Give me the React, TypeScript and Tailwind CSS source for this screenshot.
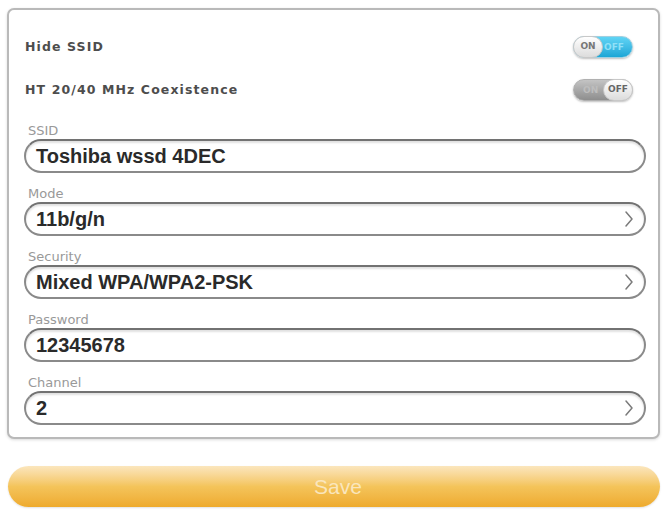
import React from "react";

function Chevron() {
  return (
    <svg width="10" height="18" viewBox="0 0 10 18" className="shrink-0">
      <path d="M2 2 L8 9 L2 16" fill="none" stroke="#7a7a7a" strokeWidth="1.5" strokeLinecap="round" strokeLinejoin="round" />
    </svg>
  );
}

function ToggleOn() {
  return (
    <div className="relative w-[60px] h-[22px] rounded-full bg-gradient-to-b from-[#5fd4f5] to-[#1aa6d6] border border-[#9fcfe0] shadow-[0_1px_2px_rgba(0,0,0,0.25)]">
      <span className="absolute right-[8px] top-[4px] text-[9px] font-bold text-[#8fe0f7] [font-family:'DejaVu_Sans',sans-serif]">OFF</span>
      <div className="absolute left-[-1px] top-[-1px] w-[30px] h-[22px] rounded-full bg-gradient-to-b from-[#ffffff] to-[#dcdcdc] border border-[#c8c8c8] flex items-center justify-center">
        <span className="text-[9px] font-bold text-[#777] [font-family:'DejaVu_Sans',sans-serif]">ON</span>
      </div>
    </div>
  );
}

function ToggleOff() {
  return (
    <div className="relative w-[60px] h-[22px] rounded-full bg-gradient-to-b from-[#c4c4c4] to-[#8e8e8e] border border-[#b0b0b0] shadow-[0_1px_2px_rgba(0,0,0,0.25)]">
      <span className="absolute left-[9px] top-[4px] text-[9px] font-bold text-[#bdbdbd] [font-family:'DejaVu_Sans',sans-serif]">ON</span>
      <div className="absolute right-[-1px] top-[-1px] w-[30px] h-[22px] rounded-full bg-gradient-to-b from-[#ffffff] to-[#dcdcdc] border border-[#c8c8c8] flex items-center justify-center">
        <span className="text-[9px] font-bold text-[#666] [font-family:'DejaVu_Sans',sans-serif]">OFF</span>
      </div>
    </div>
  );
}

function Field({ label, value, chevron }: { label: string; value: string; chevron?: boolean }) {
  return (
    <div className="flex flex-col">
      <div className="h-[16px] pl-[4px] text-[13px] leading-[16px] text-[#999999] [font-family:'DejaVu_Sans',sans-serif]">{label}</div>
      <div className="h-[34px] rounded-full border-2 border-[#8a8a8a] border-t-[#727272] bg-white shadow-[inset_0_2px_2px_rgba(0,0,0,0.12)] flex items-center pl-[10px] pr-[10px]">
        <span className="flex-1 text-[20px] font-bold text-[#2a2a2a] leading-none [font-family:'Liberation_Sans',Arial,sans-serif]">{value}</span>
        {chevron && <Chevron />}
      </div>
    </div>
  );
}

export default function App() {
  return (
    <div className="w-[665px] h-[512px] bg-white pt-[8px] px-[7px] [font-family:'Liberation_Sans',Arial,sans-serif]">
      <div className="w-[653px] rounded-[7px] border-2 border-[#b9b9b9] shadow-[0_1px_3px_rgba(0,0,0,0.15)] pl-[15px] pr-[12px] pt-[26px] pb-[12px] bg-white">
        <div className="flex items-center justify-between h-[22px] pr-[13px]">
          <span className="text-[12.5px] font-bold tracking-[1.1px] text-[#4d4d4d] pl-[1px] [font-family:'DejaVu_Sans',sans-serif]">Hide SSID</span>
          <ToggleOn />
        </div>
        <div className="flex items-center justify-between h-[22px] mt-[21px] pr-[13px]">
          <span className="text-[12.5px] font-bold tracking-[1.1px] text-[#4d4d4d] pl-[1px] [font-family:'DejaVu_Sans',sans-serif]">HT 20/40 MHz Coexistence</span>
          <ToggleOff />
        </div>
        <div className="mt-[22px] flex flex-col gap-[13px]">
          <Field label="SSID" value="Toshiba wssd 4DEC" />
          <Field label="Mode" value="11b/g/n" chevron />
          <Field label="Security" value="Mixed WPA/WPA2-PSK" chevron />
          <Field label="Password" value="12345678" />
          <Field label="Channel" value="2" chevron />
        </div>
      </div>
      <div className="mt-[27px] ml-[1px] w-[652px] h-[41px] rounded-full bg-gradient-to-b from-[#fbe6bd] via-[#f4c45a] to-[#eeaa2c] shadow-[0_1px_2px_rgba(0,0,0,0.12)] flex items-center justify-center">
        <span className="ml-[8px] text-[21px] text-[#fae6bd] [font-family:'Liberation_Sans',Arial,sans-serif]">Save</span>
      </div>
    </div>
  );
}
